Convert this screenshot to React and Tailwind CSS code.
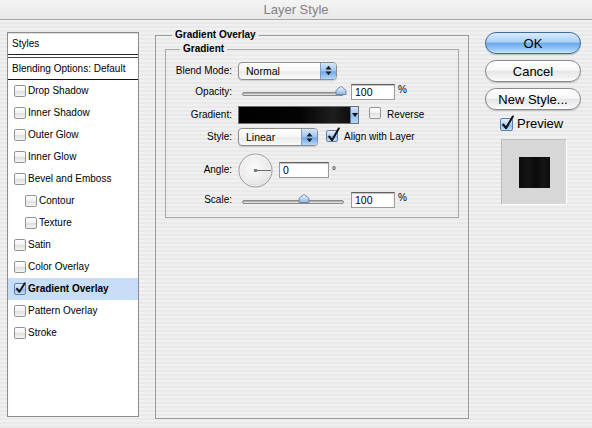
import React from "react"

const stripes =
  "bg-[repeating-linear-gradient(180deg,#f0f0f0_0px,#f0f0f0_2px,#e9e9e9_2px,#e9e9e9_4px)]"

const styleItems = [
  { label: "Drop Shadow" },
  { label: "Inner Shadow" },
  { label: "Outer Glow" },
  { label: "Inner Glow" },
  { label: "Bevel and Emboss" },
  { label: "Contour", indent: true },
  { label: "Texture", indent: true },
  { label: "Satin" },
  { label: "Color Overlay" },
  { label: "Gradient Overlay", checked: true, small: true },
  { label: "Pattern Overlay" },
  { label: "Stroke" },
]

function CheckBox({ checked, big, small }) {
  const size = big ? "w-[13px] h-[13px]" : "w-[12px] h-[12px]"
  const fill = checked
    ? "bg-[linear-gradient(180deg,#e3effc_0%,#b3d2f5_50%,#8dbcf0_55%,#c4e0fb_100%)] border-[#5f7fa8]"
    : "bg-[linear-gradient(180deg,#ffffff_0%,#f1f1f1_50%,#e0e0e0_55%,#f4f4f4_100%)] border-[#949494]"
  return (
    <span className={`relative inline-block shrink-0 rounded-[2px] border ${size} ${fill}`}>
      {checked && !small && (
        <svg
          className="absolute left-[0px] top-[-4px] overflow-visible"
          width="13"
          height="16"
          viewBox="0 0 13 16"
        >
          <path d="M2.2 9.5 L5 13.2 L11.8 1.5" fill="none" stroke="#111" strokeWidth="2.1" strokeLinecap="round" strokeLinejoin="round" />
        </svg>
      )}
      {checked && small && (
        <svg
          className="absolute left-[0px] top-[-2px] overflow-visible"
          width="11"
          height="12"
          viewBox="0 0 11 12"
        >
          <path d="M2 6.8 L4.4 9.8 L9.8 1.2" fill="none" stroke="#111" strokeWidth="1.9" strokeLinecap="round" strokeLinejoin="round" />
        </svg>
      )}
    </span>
  )
}

function UpDown() {
  return (
    <svg width="7" height="11" viewBox="0 0 7 11">
      <polygon points="0.5,4.5 3.5,0.8 6.5,4.5" fill="#1d1d1d" />
      <polygon points="0.5,6.5 3.5,10.2 6.5,6.5" fill="#1d1d1d" />
    </svg>
  )
}

function Select({ value, width }) {
  return (
    <div
      className={`flex h-[18px] items-stretch overflow-hidden rounded-[4px] border border-[#8d8d8d] bg-[linear-gradient(180deg,#ffffff_0%,#f6f6f6_50%,#ebebeb_55%,#fafafa_100%)] shadow-[0_1px_1px_rgba(0,0,0,0.15)] ${width}`}
    >
      <span className="flex flex-1 items-center pl-[7px] text-[10.5px]">{value}</span>
      <span className="flex w-[16px] items-center justify-center border-l border-[#7f9cc2] bg-[linear-gradient(180deg,#d4e6fb_0%,#9cc5f3_50%,#6fa8ea_55%,#b5d8fb_100%)]">
        <UpDown />
      </span>
    </div>
  )
}

function Thumb() {
  return (
    <svg width="12" height="9" viewBox="0 0 12 9">
      <defs>
        <linearGradient id="thumbFill" x1="0" y1="0" x2="0" y2="1">
          <stop offset="0" stopColor="#eef5fd" />
          <stop offset="0.55" stopColor="#b8d4f3" />
          <stop offset="1" stopColor="#8fb8ea" />
        </linearGradient>
      </defs>
      <path d="M1 8.5 L1 5 Q1 4 2 3.4 L5.3 0.8 Q6 0.3 6.7 0.8 L10 3.4 Q11 4 11 5 L11 8.5 Z" fill="url(#thumbFill)" stroke="#6c7f99" strokeWidth="0.9" />
    </svg>
  )
}

function Slider({ thumbLeft }) {
  return (
    <div className="relative h-[16px] w-[106px]">
      <div className="absolute left-[4px] top-[8px] h-[4px] w-[102px] rounded-full border border-[#8a8a8a] bg-[linear-gradient(180deg,#9a9a9a_0%,#d4d4d4_60%,#efefef_100%)]" />
      <div className={`absolute top-[2px] ${thumbLeft}`}>
        <Thumb />
      </div>
    </div>
  )
}

function NumField({ value, width }) {
  return (
    <div
      className={`flex h-[16px] items-center border border-[#9a9a9a] border-t-[#5f5f5f] bg-white pl-[3px] text-[10.5px] shadow-[inset_0_1px_1px_rgba(0,0,0,0.25)] ${width}`}
    >
      {value}
    </div>
  )
}

function Dial() {
  return (
    <svg width="35" height="35" viewBox="0 0 35 35">
      <defs>
        <radialGradient id="dialFill" cx="0.45" cy="0.4" r="0.65">
          <stop offset="0" stopColor="#fbfbfb" />
          <stop offset="0.75" stopColor="#e9e9e9" />
          <stop offset="1" stopColor="#cfcfcf" />
        </radialGradient>
      </defs>
      <circle cx="17.5" cy="17.5" r="16.5" fill="url(#dialFill)" stroke="#9b9b9b" strokeWidth="1" />
      <circle cx="17.5" cy="17.5" r="15.5" fill="none" stroke="#ffffff" strokeWidth="0.6" opacity="0.8" />
      <line x1="17.5" y1="17.5" x2="33" y2="17.5" stroke="#6d6d6d" strokeWidth="1" />
      <rect x="16" y="16" width="3" height="3" fill="#7a7a7a" />
    </svg>
  )
}

function Row({ label, height, children }) {
  return (
    <div className={`flex items-center ${height}`}>
      <span className="w-[67px] pr-[1px] text-right">{label}</span>
      <div className="ml-[5px] flex items-center">{children}</div>
    </div>
  )
}

function Button({ children, primary }) {
  const look = primary
    ? "border-[#3f6aa3] bg-[linear-gradient(180deg,#dcecfd_0%,#a9cff7_45%,#6ea9ec_52%,#9fcdf9_85%,#c9e6fd_100%)]"
    : "border-[#8b8b8b] bg-[linear-gradient(180deg,#ffffff_0%,#f7f7f7_45%,#e6e6e6_52%,#f3f3f3_85%,#ffffff_100%)]"
  return (
    <div
      className={`flex h-[22px] w-[96px] items-center justify-center rounded-full border text-[13px] leading-none shadow-[0_1px_1px_rgba(0,0,0,0.2)] ${look}`}
    >
      {children}
    </div>
  )
}

export default function App() {
  return (
    <div
      className={`h-[428px] w-[592px] overflow-hidden font-['Liberation_Sans',Arial,sans-serif] text-[10px] leading-[12px] text-black ${stripes}`}
    >
      <div className="flex h-[20px] items-center justify-center border-b border-[#a7a7a7] bg-[linear-gradient(180deg,#f4f4f4,#e9e9e9)] text-[13px] text-[#828282]">
        Layer Style
      </div>

      <div className="flex items-start pl-[7px]">
        {/* styles list */}
        <div className="mt-[12px] h-[385px] w-[132px] border border-[#8c8c8c] bg-white shadow-[inset_0_1px_1px_rgba(0,0,0,0.15)]">
          <div className="flex h-[22px] items-center border-b border-[#222] pl-[4px]">Styles</div>
          <div className="mt-[2px] flex h-[23px] items-center border-t border-[#444] border-b border-b-[#111] pl-[4px]">
            Blending Options: Default
          </div>
          {styleItems.map((item) => (
            <div
              key={item.label}
              className={`flex h-[22px] items-center gap-[2px] ${item.indent ? "pl-[17px]" : "pl-[6px]"} ${item.checked ? "bg-[#c8ddf8] font-bold" : ""}`}
            >
              <CheckBox checked={item.checked} small={item.small} />
              <span>{item.label}</span>
            </div>
          ))}
        </div>

        {/* settings */}
        <fieldset className="ml-[16px] mt-[9px] h-[390px] w-[314px] border border-[#9a9a9a]">
          <legend className="ml-[16px] px-[3px] font-bold">Gradient Overlay</legend>
          <fieldset className="ml-[9px] mt-[2px] h-[175px] w-[294px] border border-[#a9a9a9]">
            <legend className="ml-[14px] px-[3px] font-bold">Gradient</legend>
            <div className="mt-[5px] flex flex-col">
              <Row label="Blend Mode:" height="h-[21px]">
                <Select value="Normal" width="w-[99px]" />
              </Row>
              <Row label="Opacity:" height="h-[22px]">
                <Slider thumbLeft="left-[97px]" />
                <div className="ml-[7px]">
                  <NumField value="100" width="w-[44px]" />
                </div>
                <span className="ml-[3px] self-start">%</span>
              </Row>
              <Row label="Gradient:" height="h-[23px]">
                <div className="flex h-[18px] w-[121px] border border-[#6f6f6f]">
                  <div className="flex-1 bg-[linear-gradient(90deg,#000000_0%,#040404_55%,#1e1e1e_85%,#0e0e0e_100%)]" />
                  <div className="flex w-[8px] items-center justify-center border-l border-[#5a7aa5] bg-[linear-gradient(180deg,#d4e6fb_0%,#8fbdf1_55%,#b7d9fb_100%)]">
                    <svg width="6" height="4" viewBox="0 0 6 4">
                      <polygon points="0,0 6,0 3,4" fill="#111" />
                    </svg>
                  </div>
                </div>
                <div className="ml-[10px]">
                  <CheckBox />
                </div>
                <span className="ml-[6px]">Reverse</span>
              </Row>
              <Row label="Style:" height="h-[22px]">
                <Select value="Linear" width="w-[80px]" />
                <div className="ml-[8px]">
                  <CheckBox checked />
                </div>
                <span className="ml-[6px]">Align with Layer</span>
              </Row>
              <Row label="Angle:" height="h-[44px]">
                <Dial />
                <div className="ml-[6px]">
                  <NumField value="0" width="w-[50px]" />
                </div>
                <span className="ml-[3px] self-start pt-[12px]">°</span>
              </Row>
              <Row label="Scale:" height="h-[16px]">
                <Slider thumbLeft="left-[60px]" />
                <div className="ml-[7px]">
                  <NumField value="100" width="w-[44px]" />
                </div>
                <span className="ml-[3px] self-start">%</span>
              </Row>
            </div>
          </fieldset>
        </fieldset>

        {/* buttons */}
        <div className="ml-[16px] mt-[12px] flex w-[96px] flex-col">
          <Button primary>OK</Button>
          <div className="mt-[6px]">
            <Button>Cancel</Button>
          </div>
          <div className="mt-[6px]">
            <Button>New Style...</Button>
          </div>
          <div className="mt-[7px] flex h-[14px] items-center gap-[4px] pl-[15px] text-[13px]">
            <CheckBox checked big />
            <span>Preview</span>
          </div>
          <div className="ml-[16px] mt-[8px] flex h-[66px] w-[66px] items-center justify-center border border-[#bdbdbd] border-b-white border-r-white bg-[#d7d7d7]">
            <div className="h-[31px] w-[31px] bg-[linear-gradient(90deg,#0c0c0c_0%,#141414_30%,#0a0a0a_55%,#151515_80%,#0d0d0d_100%)]" />
          </div>
        </div>
      </div>
    </div>
  )
}
